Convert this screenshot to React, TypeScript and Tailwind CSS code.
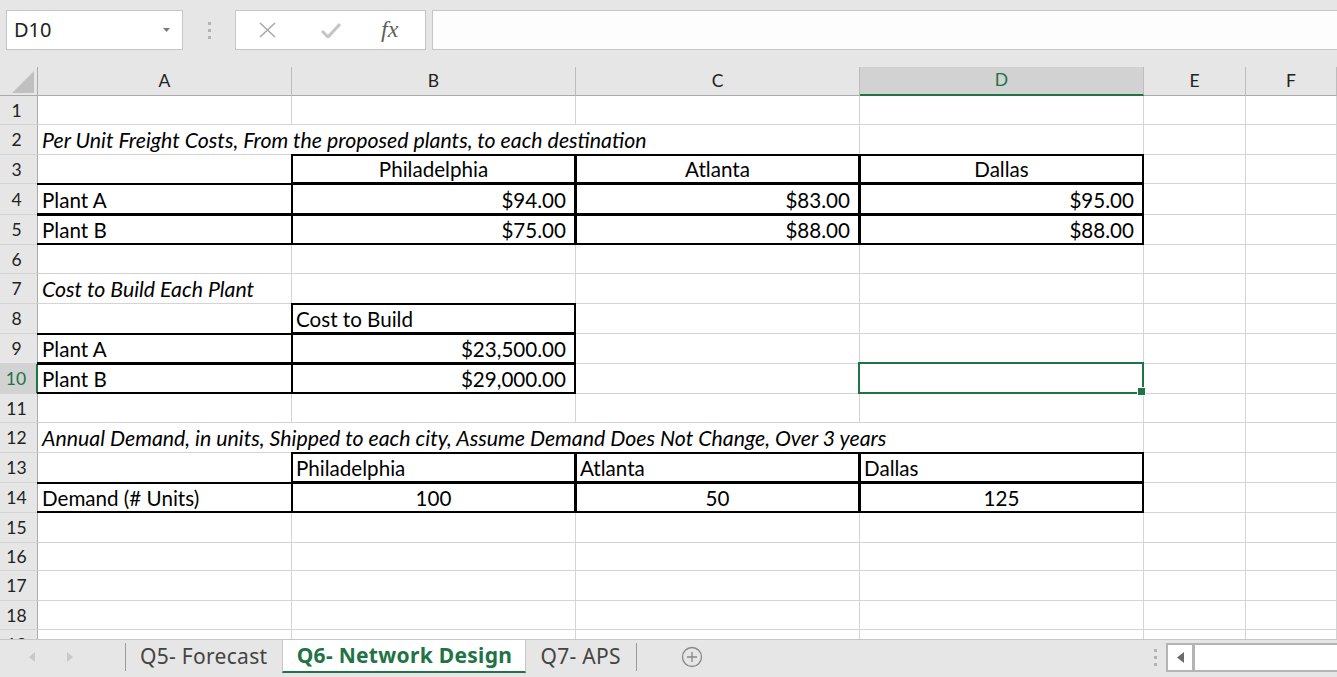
import React from 'react';

type Side = 't' | 'b' | 'l' | 'r';
type Align = 'left' | 'right' | 'center';

interface CellData {
  text: string;
  align?: Align;
  italic?: boolean;
}

// row heights in px, rows 1..19 (19 is cut off by the tab bar)
const HEIGHTS = [29, 30, 29, 31, 30, 29, 30, 30, 30, 30, 29, 30, 30, 30, 30, 28, 30, 29, 30];
const H_CLASS: Record<number, string> = {
  28: 'h-[28px]',
  29: 'h-[29px]',
  30: 'h-[30px]',
  31: 'h-[31px]',
};

const COLS = ['A', 'B', 'C', 'D', 'E', 'F'];
const COL_W: Record<string, string> = {
  A: 'w-[254px] shrink-0',
  B: 'w-[284px] shrink-0',
  C: 'w-[284px] shrink-0',
  D: 'w-[284px] shrink-0',
  E: 'w-[102px] shrink-0',
  F: 'flex-1',
};

const CELLS: Record<string, CellData> = {
  A2: { text: 'Per Unit Freight Costs, From the proposed plants, to each destination', italic: true },
  B3: { text: 'Philadelphia', align: 'center' },
  C3: { text: 'Atlanta', align: 'center' },
  D3: { text: 'Dallas', align: 'center' },
  A4: { text: 'Plant A' },
  B4: { text: '$94.00', align: 'right' },
  C4: { text: '$83.00', align: 'right' },
  D4: { text: '$95.00', align: 'right' },
  A5: { text: 'Plant B' },
  B5: { text: '$75.00', align: 'right' },
  C5: { text: '$88.00', align: 'right' },
  D5: { text: '$88.00', align: 'right' },
  A7: { text: 'Cost to Build Each Plant', italic: true },
  B8: { text: 'Cost to Build' },
  A9: { text: 'Plant A' },
  B9: { text: '$23,500.00', align: 'right' },
  A10: { text: 'Plant B' },
  B10: { text: '$29,000.00', align: 'right' },
  A12: {
    text: 'Annual Demand, in units, Shipped to each city, Assume Demand Does Not Change, Over 3 years',
    italic: true,
  },
  B13: { text: 'Philadelphia' },
  C13: { text: 'Atlanta' },
  D13: { text: 'Dallas' },
  A14: { text: 'Demand (# Units)' },
  B14: { text: '100', align: 'center' },
  C14: { text: '50', align: 'center' },
  D14: { text: '125', align: 'center' },
};

// cells whose right gridline is hidden by overflowing text
const NO_GRID_R = new Set(['A2', 'B2', 'A12', 'B12', 'C12']);

const ALL: Side[] = ['t', 'b', 'l', 'r'];
const TOP_BOTTOM: Side[] = ['t', 'b'];

function thickSides(col: string, row: number): Side[] {
  const inBox = (c0: string, c1: string, r0: number, r1: number) =>
    col >= c0 && col <= c1 && row >= r0 && row <= r1;
  if (inBox('B', 'D', 3, 5)) return ALL;
  if (col === 'A' && (row === 4 || row === 5)) return TOP_BOTTOM;
  if (inBox('B', 'B', 8, 10)) return ALL;
  if (col === 'A' && (row === 9 || row === 10)) return TOP_BOTTOM;
  if (inBox('B', 'D', 13, 14)) return ALL;
  if (col === 'A' && row === 14) return TOP_BOTTOM;
  return [];
}

const SIDE_CLASS: Record<Side, string> = {
  t: 'absolute -top-px -left-px -right-px h-[2px] bg-black z-10',
  b: 'absolute -bottom-px -left-px -right-px h-[2px] bg-black z-10',
  l: 'absolute -left-px -top-px -bottom-px w-[2px] bg-black z-10',
  r: 'absolute -right-px -top-px -bottom-px w-[2px] bg-black z-10',
};

const JUSTIFY: Record<Align, string> = {
  left: 'justify-start pl-[4px]',
  right: 'justify-end pr-[9px]',
  center: 'justify-center',
};

function Cell({ col, row }: { col: string; row: number }) {
  const ref = `${col}${row}`;
  const data = CELLS[ref];
  const sides = thickSides(col, row);
  const align = data?.align ?? 'left';

  return (
    <div
      className={`relative flex items-end pb-[4px] border-b border-[#d4d4d4] ${
        NO_GRID_R.has(ref) ? '' : 'border-r'
      } ${COL_W[col]} ${JUSTIFY[align]}`}
    >
      {data && (
        <span
          className={`whitespace-nowrap leading-[20px] ${data.italic ? 'italic text-[21.3px]' : 'text-[20.6px]'}`}
        >
          {data.text}
        </span>
      )}
      {sides.map(s => (
        <span key={s} className={SIDE_CLASS[s]} />
      ))}
      {ref === 'D10' && (
        <>
          <span className="absolute -left-[2px] -top-[2px] -right-px -bottom-px border-2 border-[#217346] z-20" />
          <span className="absolute -right-[3px] -bottom-[3px] w-[9px] h-[9px] bg-[#217346] border border-white z-30" />
        </>
      )}
    </div>
  );
}

function Row({ row }: { row: number }) {
  const selected = row === 10;
  return (
    <div className={`flex shrink-0 ${H_CLASS[HEIGHTS[row - 1]]}`}>
      <div
        className={`w-[38px] shrink-0 flex items-center justify-center pr-[4px] pt-[2px] text-[17.5px] border-b border-b-[#d4d4d4] ${
          selected
            ? 'bg-[#d2d2d2] text-[#217346] border-r-2 border-r-[#217346]'
            : 'bg-[#e6e6e6] text-[#222] border-r border-r-[#ababab]'
        }`}
      >
        {row}
      </div>
      {COLS.map(c => (
        <Cell key={c} col={c} row={row} />
      ))}
    </div>
  );
}

function ColumnHeader() {
  return (
    <div className="flex h-[29px] shrink-0 bg-[#e6e6e6] text-[17.5px]">
      <div className="relative w-[38px] shrink-0 border-r border-b border-[#ababab]">
        <svg className="absolute right-[3px] bottom-[2px]" width="22" height="22" viewBox="0 0 22 22">
          <polygon points="22,0 22,22 0,22" fill="#c0c0c0" />
        </svg>
      </div>
      {COLS.map(c =>
        c === 'D' ? (
          <div
            key={c}
            className={`${COL_W[c]} flex items-center justify-center bg-[#d2d2d2] text-[#217346] border-r border-r-[#bdbdbd] border-b-2 border-b-[#217346]`}
          >
            {c}
          </div>
        ) : (
          <div
            key={c}
            className={`${COL_W[c]} flex items-center justify-center text-[#222] border-r border-r-[#bdbdbd] border-b border-b-[#ababab]`}
          >
            {c}
          </div>
        )
      )}
    </div>
  );
}

function FormulaBar() {
  return (
    <div className="h-[67px] shrink-0 flex items-start pt-[10px] bg-[#e6e6e6] font-['Noto_Sans',sans-serif]">
      <div className="ml-[6px] w-[177px] h-[40px] flex items-center justify-between pl-[7px] pr-[12px] bg-white border border-[#c6c6c6]">
        <span className="text-[20px] text-[#222]">D10</span>
        <svg width="7" height="4" viewBox="0 0 7 4">
          <polygon points="0,0 7,0 3.5,4" fill="#7a7a7a" />
        </svg>
      </div>
      <div className="w-[52px] h-[40px] flex flex-col items-center justify-center gap-[4px]">
        <span className="w-[3px] h-[3px] bg-[#b3b3b3]" />
        <span className="w-[3px] h-[3px] bg-[#b3b3b3]" />
        <span className="w-[3px] h-[3px] bg-[#b3b3b3]" />
      </div>
      <div className="w-[191px] h-[40px] flex items-center bg-white border border-[#c6c6c6]">
        <svg className="ml-[22px]" width="19" height="16" viewBox="0 0 19 16">
          <path d="M2 1 L17 15 M17 1 L2 15" stroke="#a8a8a8" strokeWidth="1.6" fill="none" />
        </svg>
        <svg className="ml-[44px]" width="20" height="15" viewBox="0 0 20 15">
          <path d="M1 8 L7 14 L19 1" stroke="#c4c4c4" strokeWidth="3" fill="none" />
        </svg>
        <span className="ml-[40px] -mt-[2px] font-['Liberation_Serif',serif] italic text-[24px] text-[#5f5f5f]">
          fx
        </span>
      </div>
      <div className="ml-[6px] flex-1 h-[40px] bg-[#fdfdfd] border border-[#c6c6c6] -mr-[2px]" />
    </div>
  );
}

function TabBar() {
  return (
    <div className="h-[38px] shrink-0 flex items-start border-t border-[#c6c6c6] bg-[#e6e6e6] font-['Noto_Sans',sans-serif] text-[21px] tracking-[0.3px]">
      <div className="w-[125px] h-[34px] flex items-center pl-[29px] gap-[32px]">
        <svg width="6" height="10" viewBox="0 0 6 10">
          <polygon points="6,0 6,10 0,5" fill="#c9c9c9" />
        </svg>
        <svg width="6" height="10" viewBox="0 0 6 10">
          <polygon points="0,0 0,10 6,5" fill="#c9c9c9" />
        </svg>
      </div>
      <div className="w-px h-[28px] mt-[3px] bg-[#9a9a9a]" />
      <div className="h-[34px] pl-[14px] pr-[15px] flex items-center text-[#444]">Q5- Forecast</div>
      <div className="h-[33px] w-[244px] flex items-center justify-center bg-white border-x border-[#c6c6c6] border-b-2 border-b-[#217346] font-bold text-[#217346]">
        Q6- Network Design
      </div>
      <div className="h-[34px] pl-[14px] pr-[15px] flex items-center text-[#444]">Q7- APS</div>
      <div className="w-px h-[28px] mt-[3px] bg-[#9a9a9a]" />
      <div className="h-[34px] ml-[44px] flex items-center">
        <svg width="22" height="22" viewBox="0 0 22 22">
          <circle cx="11" cy="11" r="9.5" stroke="#888" strokeWidth="1.3" fill="none" />
          <path d="M11 6 V16 M6 11 H16" stroke="#888" strokeWidth="1.3" />
        </svg>
      </div>
      <div className="flex-1" />
      <div className="h-[34px] w-[20px] flex flex-col items-center justify-center gap-[4px]">
        <span className="w-[3px] h-[3px] bg-[#b3b3b3]" />
        <span className="w-[3px] h-[3px] bg-[#b3b3b3]" />
        <span className="w-[3px] h-[3px] bg-[#b3b3b3]" />
      </div>
      <div className="mt-[3px] ml-[1px] w-[171px] h-[29px] flex bg-white border-2 border-[#b4b4b4] border-r-0">
        <div className="w-[27px] flex items-center justify-center border-r-[3px] border-[#b4b4b4]">
          <svg width="7" height="11" viewBox="0 0 7 11">
            <polygon points="7,0 7,11 0,5.5" fill="#6b6b6b" />
          </svg>
        </div>
      </div>
    </div>
  );
}

export default function App() {
  const rows = HEIGHTS.map((_, i) => i + 1);
  return (
    <div className="w-[1337px] h-[677px] flex flex-col overflow-hidden bg-[#e6e6e6] font-['Lato',sans-serif] text-black">
      <FormulaBar />
      <ColumnHeader />
      <div className="flex-1 min-h-0 overflow-hidden bg-white">
        {rows.map(r => (
          <Row key={r} row={r} />
        ))}
      </div>
      <TabBar />
    </div>
  );
}
